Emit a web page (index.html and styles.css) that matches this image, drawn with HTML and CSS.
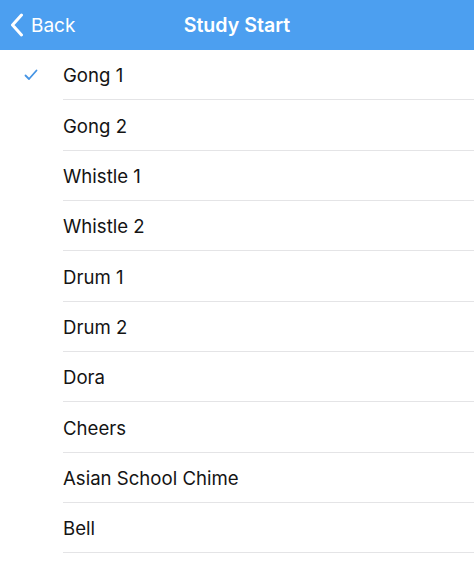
FILE: index.html
```html
<!DOCTYPE html>
<html>
<head>
<meta charset="utf-8">
<link rel="stylesheet" href="styles.css">
</head>
<body>
<div class="nav">
  <div class="back">
    <svg class="chev" width="14" height="24" viewBox="0 0 14 24"><path d="M11.5 2 L2.5 12 L11.5 22" fill="none" stroke="#fff" stroke-width="3" stroke-linecap="round" stroke-linejoin="round"/></svg>
    <span>Back</span>
  </div>
  <div class="title">Study Start</div>
</div>
<ul class="list">
  <li class="row"><span class="check"><svg width="14" height="12" viewBox="0 0 14 12"><path d="M1.5 6.5 L5 10 L12.5 1.5" fill="none" stroke="#4594e4" stroke-width="1.8" stroke-linecap="round" stroke-linejoin="round"/></svg></span><span class="label">Gong 1</span></li>
  <li class="row"><span class="check"></span><span class="label">Gong 2</span></li>
  <li class="row"><span class="check"></span><span class="label">Whistle 1</span></li>
  <li class="row"><span class="check"></span><span class="label">Whistle 2</span></li>
  <li class="row"><span class="check"></span><span class="label">Drum 1</span></li>
  <li class="row"><span class="check"></span><span class="label">Drum 2</span></li>
  <li class="row"><span class="check"></span><span class="label">Dora</span></li>
  <li class="row"><span class="check"></span><span class="label">Cheers</span></li>
  <li class="row"><span class="check"></span><span class="label">Asian School Chime</span></li>
  <li class="row"><span class="check"></span><span class="label">Bell</span></li>
</ul>
</body>
</html>
```
FILE: styles.css
```css
html, body {
  margin: 0;
  padding: 0;
  background: #fff;
  font-family: Inter, "Liberation Sans", sans-serif;
}
.nav {
  position: relative;
  height: 50px;
  background: #4c9ff0;
  color: #fff;
  display: flex;
  align-items: center;
  justify-content: center;
}
.back {
  position: absolute;
  left: 10px;
  top: 0;
  height: 50px;
  display: flex;
  align-items: center;
  gap: 7px;
  font-size: 19px;
}
.chev { display: block; margin-top: -1px; }
.title {
  font-size: 19.6px;
  font-weight: 600;
}
.list {
  list-style: none;
  margin: 0;
  padding: 0;
}
.row {
  height: 50.35px;
  box-sizing: border-box;
  display: flex;
  align-items: center;
  position: relative;
}
.row::after {
  content: "";
  position: absolute;
  left: 63px;
  right: 0;
  bottom: 0;
  height: 1px;
  background: #e4e4e6;
}
.check {
  width: 63px;
  flex: none;
  display: flex;
  justify-content: center;
  padding-right: 1px;
  box-sizing: border-box;
}
.check svg { display: block; margin-left: -1px; }
.label {
  font-size: 18.6px;
  color: #141414;
}
```
